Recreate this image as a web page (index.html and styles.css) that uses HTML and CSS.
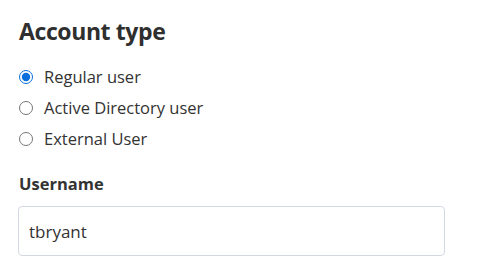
FILE: index.html
```html
<!DOCTYPE html>
<html>
<head>
<meta charset="utf-8">
<link rel="stylesheet" href="styles.css">
</head>
<body>
<div class="panel">
  <h2 class="title">Account type</h2>
  <div class="options">
    <label class="option"><input type="radio" name="type" checked><span>Regular user</span></label>
    <label class="option"><input type="radio" name="type"><span>Active Directory user</span></label>
    <label class="option"><input type="radio" name="type"><span>External User</span></label>
  </div>
  <div class="field">
    <label class="field-label" for="username">Username</label>
    <input class="text-input" id="username" type="text" value="tbryant">
  </div>
</div>
</body>
</html>
```
FILE: styles.css
```css
html, body {
  margin: 0;
  padding: 0;
  background: #ffffff;
}
body {
  font-family: "Open Sans", "Noto Sans", sans-serif;
  color: #333333;
}
.panel {
  padding: 12px 34px 0 18px;
  display: flex;
  flex-direction: column;
}
.title {
  margin: 0 0 0 1px;
  font-size: 23px;
  letter-spacing: -0.4px;
  font-weight: 700;
  line-height: 38px;
  color: #2f2f2f;
}
.options {
  display: flex;
  flex-direction: column;
  margin-top: 11px;
}
.option {
  display: flex;
  align-items: center;
  height: 31px;
  font-size: 16.5px;
  color: #333333;
}
.option input {
  width: 14px;
  height: 14px;
  margin: 0 11px 0 1px;
  accent-color: #0a6fdc;
}
.field {
  display: flex;
  flex-direction: column;
  margin-top: 18px;
}
.field-label {
  font-size: 16.5px;
  font-weight: 700;
  line-height: 24px;
  color: #333333;
  margin-left: 1px;
}
.text-input {
  margin-top: 10px;
  box-sizing: border-box;
  height: 50px;
  width: 427px;
  border: 1px solid #d3d8e2;
  border-radius: 4px;
  padding: 0 10px;
  font-family: "Open Sans", "Noto Sans", sans-serif;
  font-size: 17px;
  color: #333333;
  outline: none;
}
```
